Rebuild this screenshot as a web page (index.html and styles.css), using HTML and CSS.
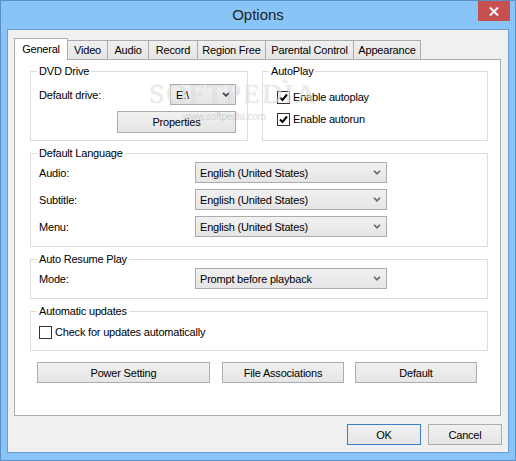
FILE: index.html
```html
<!DOCTYPE html>
<html>
<head>
<meta charset="utf-8">
<link rel="stylesheet" href="styles.css">
</head>
<body>
<div class="window">
  <div class="titlebar">
    <span></span>
    <div class="title">Options</div>
    <div class="close"><svg width="10" height="9" viewBox="0 0 10 9"><path d="M1 0.5 L9 8.5 M9 0.5 L1 8.5" stroke="#fff" stroke-width="2"/></svg></div>
  </div>
  <div class="client">
    <div class="tabs">
      <div class="tab active t-general">General</div>
      <div class="tab t-video">Video</div>
      <div class="tab t-audio">Audio</div>
      <div class="tab t-record">Record</div>
      <div class="tab t-region">Region Free</div>
      <div class="tab t-parental">Parental Control</div>
      <div class="tab t-appearance">Appearance</div>
    </div>
    <div class="panel">
      <div class="watermark"><span class="wm-big">SOFTPEDIA</span><span class="wm-tm">™</span><span class="wm-small">www.softpedia.com</span></div>
      <div class="row-top">
        <fieldset class="group">
          <legend>DVD Drive</legend>
          <div class="dvd-grid">
            <span class="label">Default drive:</span>
            <div class="combo combo-drive"><span>E:\</span><svg class="arrow" width="8" height="5" viewBox="0 0 8 5"><path d="M1 0.8 L4 3.8 L7 0.8" fill="none" stroke="#444" stroke-width="1.8"/></svg></div>
            <button class="btn btn-props">Properties</button>
          </div>
        </fieldset>
        <fieldset class="group">
          <legend>AutoPlay</legend>
          <div class="checks">
            <label class="check"><span class="box"><svg width="11" height="11" viewBox="0 0 11 11"><path d="M2 5.5 L4.5 8 L9 2.5" fill="none" stroke="#000" stroke-width="2"/></svg></span>Enable autoplay</label>
            <label class="check"><span class="box"><svg width="11" height="11" viewBox="0 0 11 11"><path d="M2 5.5 L4.5 8 L9 2.5" fill="none" stroke="#000" stroke-width="2"/></svg></span>Enable autorun</label>
          </div>
        </fieldset>
      </div>
      <fieldset class="group wide">
        <legend>Default Language</legend>
        <div class="form-grid">
          <span class="label">Audio:</span>
          <div class="combo combo-lang"><span>English (United States)</span><svg class="arrow" width="8" height="5" viewBox="0 0 8 5"><path d="M1 0.8 L4 3.8 L7 0.8" fill="none" stroke="#666" stroke-width="1.6"/></svg></div>
          <span class="label">Subtitle:</span>
          <div class="combo combo-lang"><span>English (United States)</span><svg class="arrow" width="8" height="5" viewBox="0 0 8 5"><path d="M1 0.8 L4 3.8 L7 0.8" fill="none" stroke="#666" stroke-width="1.6"/></svg></div>
          <span class="label">Menu:</span>
          <div class="combo combo-lang"><span>English (United States)</span><svg class="arrow" width="8" height="5" viewBox="0 0 8 5"><path d="M1 0.8 L4 3.8 L7 0.8" fill="none" stroke="#666" stroke-width="1.6"/></svg></div>
        </div>
      </fieldset>
      <fieldset class="group wide">
        <legend>Auto Resume Play</legend>
        <div class="form-grid">
          <span class="label">Mode:</span>
          <div class="combo combo-lang"><span>Prompt before playback</span><svg class="arrow" width="8" height="5" viewBox="0 0 8 5"><path d="M1 0.8 L4 3.8 L7 0.8" fill="none" stroke="#666" stroke-width="1.6"/></svg></div>
        </div>
      </fieldset>
      <fieldset class="group wide">
        <legend>Automatic updates</legend>
        <div class="updates">
          <label class="check"><span class="box"></span>Check for updates automatically</label>
        </div>
      </fieldset>
      <div class="panel-buttons">
        <button class="btn btn-power">Power Setting</button>
        <button class="btn btn-file">File Associations</button>
        <button class="btn btn-default">Default</button>
      </div>
    </div>
    <div class="dialog-buttons">
      <button class="btn btn-dlg btn-ok">OK</button>
      <button class="btn btn-dlg">Cancel</button>
    </div>
  </div>
</div>
</body>
</html>
```

FILE: styles.css
```css
* { box-sizing: border-box; }
html, body { margin: 0; padding: 0; }
body {
  width: 516px;
  height: 461px;
  font-family: "Liberation Sans", Arial, sans-serif;
  font-size: 11px;
  letter-spacing: -0.2px;
  color: #000;
  background: #88c4f5;
}
.window {
  width: 516px;
  height: 461px;
  border: 1px solid #5c8fc4;
  background: #88c5f6;
  display: flex;
  flex-direction: column;
}
.titlebar {
  height: 28px;
  display: grid;
  grid-template-columns: 1fr auto 1fr;
}
.title {
  font-size: 15px;
  letter-spacing: 0;
  line-height: 28px;
  color: #222;
}
.close {
  justify-self: end;
  width: 32px;
  height: 20px;
  margin-right: 5px;
  background: #c75050;
  display: flex;
  align-items: center;
  justify-content: center;
}
.client {
  margin: 0 6px 7px 6px;
  height: 424px;
  border: 1px solid #6a9ed3;
  background: #f0f0f0;
  display: flex;
  flex-direction: column;
}
.tabs {
  display: flex;
  align-items: flex-end;
  height: 29px;
  padding-left: 6px;
}
.tab {
  height: 19px;
  border: 1px solid #acacac;
  border-bottom: none;
  background: linear-gradient(#f0f0f0, #e5e5e5);
  display: flex;
  align-items: center;
  justify-content: center;
  margin-left: -1px;
  white-space: nowrap;
}
.tab.active {
  margin-left: 0;
  height: 22px;
  margin-bottom: -1px;
  background: #fff;
  position: relative;
  z-index: 1;
  padding-bottom: 1px;
}
.t-general { width: 54px; }
.t-video { width: 41px; }
.t-audio { width: 42px; }
.t-record { width: 50px; }
.t-region { width: 69px; }
.t-parental { width: 89px; }
.t-appearance { width: 68px; }
.panel {
  position: relative;
  margin: 0 7px 0 6px;
  height: 357px;
  border: 1px solid #acacac;
  background: #fff;
  padding: 4px 12px 0 15px;
  display: flex;
  flex-direction: column;
}
.watermark {
  position: absolute;
  left: 134px;
  top: 18px;
  width: 150px;
  height: 60px;
  pointer-events: none;
  z-index: 2;
}
.wm-big {
  position: absolute;
  left: 0;
  top: 0;
  font-family: "Liberation Serif", serif;
  font-size: 28px;
  letter-spacing: 2px;
  color: rgba(255,255,255,0.6);
  text-shadow: 0 0 1px rgba(0,0,0,0.22);
}
.wm-tm {
  position: absolute;
  left: 132px;
  top: 1px;
  font-size: 7px;
  color: #d8d8d8;
}
.wm-small {
  position: absolute;
  left: 34px;
  top: 33px;
  font-size: 10px;
  color: rgba(170,170,170,0.45);
}
.row-top {
  display: grid;
  grid-template-columns: 218px 226px;
  column-gap: 14px;
}
fieldset.group {
  margin: 0;
  padding: 0;
  min-width: 0;
  border: 1px solid #dcdcdc;
}
fieldset.group legend {
  margin-left: 6px;
  padding: 0 2px;
  line-height: 14px;
}
.wide { margin-top: 5px !important; }
.dvd-grid {
  display: grid;
  grid-template-columns: 1fr auto;
  row-gap: 6px;
  padding: 6px 11px 7px 8px;
  align-items: center;
}
.combo {
  height: 21px;
  border: 1px solid #acacac;
  background: linear-gradient(#f1f1f1, #e5e5e5);
  display: flex;
  align-items: center;
  justify-content: space-between;
  padding: 0 5px 0 4px;
  white-space: nowrap;
}
.combo-drive { width: 66px; padding-left: 5px; justify-self: end; }
.combo-lang { width: 192px; padding-left: 4px; }
.btn {
  font-family: inherit;
  font-size: 11px;
  letter-spacing: -0.2px;
  color: #000;
  border: 1px solid #acacac;
  background: linear-gradient(#f1f1f1, #e5e5e5);
  padding: 0;
  margin: 0;
  height: 21px;
}
.btn-props {
  grid-column: 2;
  width: 119px;
  height: 22px;
  justify-self: end;
}
.checks {
  padding: 8px 0 0 14px;
  display: flex;
  flex-direction: column;
}
.check {
  height: 22px;
  display: flex;
  align-items: center;
  gap: 3px;
}
.box {
  width: 13px;
  height: 13px;
  border: 1px solid #333;
  background: #fff;
  display: flex;
  align-items: center;
  justify-content: center;
}
.form-grid {
  display: grid;
  grid-template-columns: 156px 192px;
  row-gap: 6px;
  padding: 2px 0 9px 8px;
  align-items: center;
}
.updates {
  padding: 3px 0 7px 8px;
}
.panel-buttons {
  display: flex;
  margin: 11px 0 0 7px;
}
.btn-power { width: 173px; }
.btn-file { width: 122px; margin-left: 12px; }
.btn-default { width: 122px; margin-left: 11px; }
.dialog-buttons {
  display: flex;
  justify-content: flex-end;
  gap: 7px;
  margin: 8px 6px 0 0;
}
.btn-dlg { width: 74px; height: 21px; }
.btn-ok { border-color: #3c7fc7; }
```
